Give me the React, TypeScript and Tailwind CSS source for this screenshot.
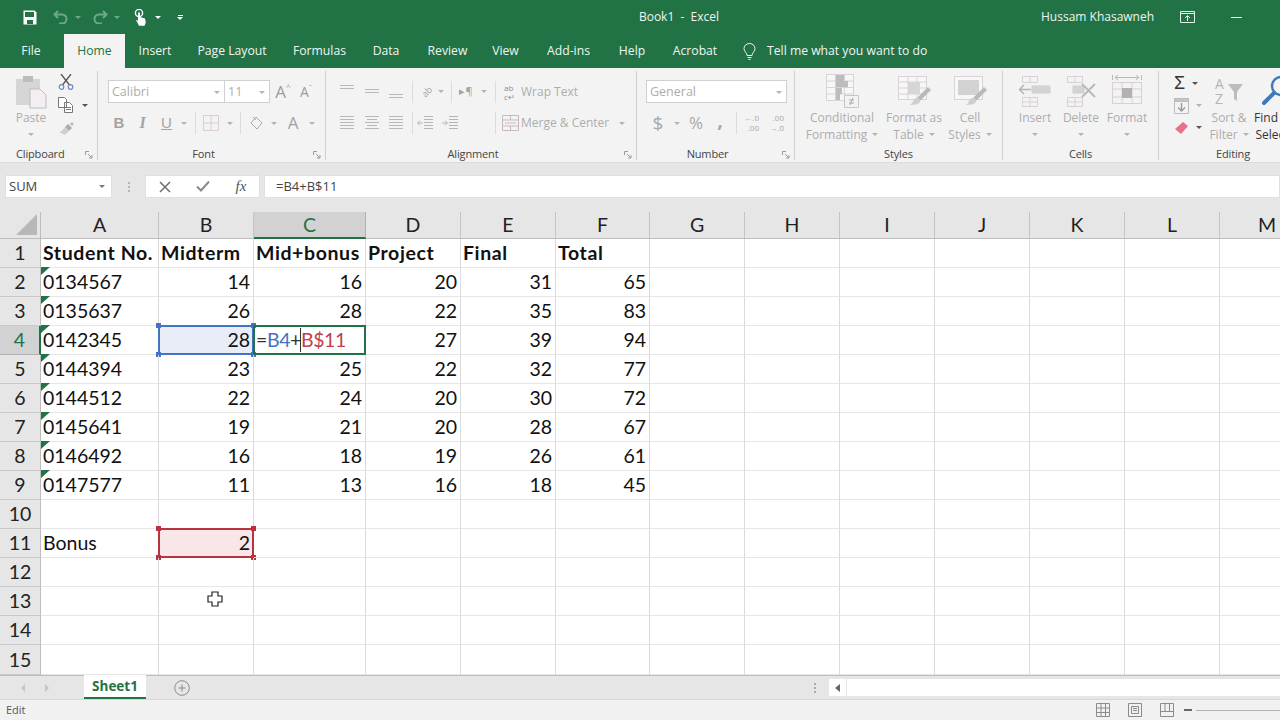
import type { ReactNode } from "react";

const ui = "font-['Open_Sans','Noto_Sans',sans-serif]";
const cellFont = "font-['Lato',sans-serif]";

const tabs: [string, string][] = [
  ["File", "w-[46px] mr-[10px]"],
  ["Home", "w-[61px]"],
  ["Insert", "w-[60px]"],
  ["Page Layout", "w-[94px]"],
  ["Formulas", "w-[81px]"],
  ["Data", "w-[52px]"],
  ["Review", "w-[71px]"],
  ["View", "w-[45px]"],
  ["Add-ins", "w-[81px]"],
  ["Help", "w-[46px]"],
  ["Acrobat", "w-[80px]"],
];

const columns = ["A", "B", "C", "D", "E", "F", "G", "H", "I", "J", "K", "L", "M"];

const students: [string, number, number, number, number, number][] = [
  ["0134567", 14, 16, 20, 31, 65],
  ["0135637", 26, 28, 22, 35, 83],
  ["0142345", 28, 0, 27, 39, 94],
  ["0144394", 23, 25, 22, 32, 77],
  ["0144512", 22, 24, 20, 30, 72],
  ["0145641", 19, 21, 20, 28, 67],
  ["0146492", 16, 18, 19, 26, 61],
  ["0147577", 11, 13, 16, 18, 45],
];

function Caret({ className = "border-t-[#b4b4b4]" }: { className?: string }) {
  return <span className={"inline-block w-0 h-0 border-x-[3px] border-x-transparent border-t-[3px] " + className} />;
}

function Launcher() {
  return (
    <svg width="8" height="8" viewBox="0 0 8 8" fill="none" stroke="#9a9a9a" strokeWidth="1" className="absolute right-[4px] top-[5px]">
      <path d="M.5 4V.5H4M3 3l4 4M7 4v3H4" />
    </svg>
  );
}

function Sep() {
  return <span className="w-px h-[22px] bg-[#dcdcdc] shrink-0" />;
}

function Box({ className, children }: { className: string; children: ReactNode }) {
  return <span className={"flex items-center justify-center shrink-0 " + className}>{children}</span>;
}

function Group({ label, width, labelClass = "text-center", launcher, children }: { label: string; width: string; labelClass?: string; launcher?: boolean; children: ReactNode }) {
  return (
    <section className={"flex flex-col shrink-0 h-[89px] my-[3px] border-r border-[#cfcfcf] " + width}>
      <div className="h-[75px] flex">{children}</div>
      <div className={"relative h-[14px] leading-[16px] text-[11px] tracking-[-0.15px] text-[#444] " + labelClass}>
        {label}
        {launcher && <Launcher />}
      </div>
    </section>
  );
}

function BigButton({ width, icon, lines, caret, dark }: { width: string; icon: ReactNode; lines: string[]; caret?: boolean; dark?: boolean }) {
  return (
    <div className={"flex flex-col items-center shrink-0 " + width}>
      <div className="h-[36px] mt-[2px] flex items-center justify-center">{icon}</div>
      <div className={"text-[12px] leading-[17px] text-center whitespace-nowrap " + (dark ? "text-[#333]" : "text-[#adadad]")}>
        <div>{lines[0]}</div>
        <div className="h-[17px] flex items-center justify-center gap-[5px]">
          {lines[1]}
          {caret && <Caret />}
        </div>
      </div>
    </div>
  );
}

function Lines({ rows }: { rows: [number, number][] }) {
  return (
    <svg width="16" height="16" viewBox="0 0 16 16" stroke="#b9b9b9" strokeWidth="1">
      {rows.map(([y, w], i) => (
        <path key={i} d={`M${8 - w / 2} ${y + 0.5}h${w}`} />
      ))}
    </svg>
  );
}

const alignLines: [number, number][] = [[1, 14], [4, 14], [7, 14], [10, 14], [13, 14]];

function Brush() {
  return (
    <g stroke="none">
      <path d="M31 12l3 3-11 11-3-3z" fill="#b9b9b9" />
      <path d="M19 23c3 0 5 2 4 4-1 2-5 3-10 3 3-2 3-6 6-7z" fill="#cfcfcf" />
    </g>
  );
}

function Grid() {
  return (
    <div className={"grid grid-cols-[41px_118px_95px_112px_95px_95px_94px_95px_95px_95px_95px_95px_95px_95px] grid-rows-[27px_repeat(14,29px)_30px] h-[463px] overflow-hidden bg-white text-[19.5px] leading-none text-[#111] " + cellFont}>
      <div className="bg-[#e6e6e6] border-r border-b border-[#bdbdbd] flex items-end justify-end pr-[3px] pb-[3px]">
        <svg width="21" height="21" viewBox="0 0 21 21">
          <path d="M21 0v21H0z" fill="#b8b8b8" />
        </svg>
      </div>
      {columns.map((c) => (
        <div
          key={c}
          className={
            "flex items-center justify-center border-r " +
            (c === "C"
              ? "bg-[#d2d2d2] text-[#217346] border-b-2 border-b-[#217346] border-r-[#b0b0b0]"
              : "bg-[#e6e6e6] text-[#222] border-b border-b-[#bdbdbd] border-r-[#c4c4c4]")
          }
        >
          {c}
        </div>
      ))}
      {Array.from({ length: 15 }, (_, i) => i + 1).map((n) => (
        <Row key={n} n={n} />
      ))}
    </div>
  );
}

function RowHead({ n }: { n: number }) {
  return (
    <div
      className={
        "flex items-center justify-center border-b border-r " +
        (n === 4 ? "bg-[#d2d2d2] text-[#217346] border-r-2 border-r-[#217346] border-b-[#b0b0b0]" : "bg-[#e6e6e6] text-[#222] border-b-[#c9c9c9] border-r-[#bdbdbd]")
      }
    >
      {n}
    </div>
  );
}

function Cell({ children, right, bold, className = "" }: { children?: ReactNode; right?: boolean; bold?: boolean; className?: string }) {
  return (
    <div
      className={
        "relative flex items-center whitespace-nowrap border-r border-b border-r-[#dadada] border-b-[#e6e6e6] " +
        (right ? "justify-end pr-[3px] " : "pl-[2px] ") +
        (bold ? "font-bold tracking-[0.6px] " : "") +
        className
      }
    >
      {children}
    </div>
  );
}

function Handles({ color }: { color: string }) {
  const base = "absolute w-[5px] h-[5px] " + color;
  return (
    <>
      <span className={base + " -left-[3px] -top-[3px]"} />
      <span className={base + " -right-[3px] -top-[3px]"} />
      <span className={base + " -left-[3px] -bottom-[3px]"} />
      <span className={base + " -right-[3px] -bottom-[3px]"} />
    </>
  );
}

function Flag() {
  return <span className="absolute left-0 -top-px w-0 h-0 border-t-[8px] border-r-[9px] border-t-[#217346] border-r-transparent" />;
}

function Row({ n }: { n: number }) {
  const blanks = columns.slice(6).map((c) => <Cell key={c} />);
  if (n === 1) {
    return (
      <>
        <RowHead n={n} />
        {["Student No.", "Midterm", "Mid+bonus", "Project", "Final", "Total"].map((t) => (
          <Cell key={t} bold>
            {t}
          </Cell>
        ))}
        {blanks}
      </>
    );
  }
  const s = students[n - 2];
  if (s) {
    const [id, mid, bonus, project, final, total] = s;
    return (
      <>
        <RowHead n={n} />
        <Cell className={n === 4 ? "border-r-0" : ""}>
          <Flag />
          {id}
        </Cell>
        {n === 4 ? (
          <Cell right className="bg-[#e8edf7]">
            <span className="absolute -inset-px border-2 border-[#4472c4]" />
            <Handles color="bg-[#4472c4]" />
            {mid}
          </Cell>
        ) : (
          <Cell right>{mid}</Cell>
        )}
        {n === 4 ? (
          <Cell className="z-10 tracking-[-0.4px]">
            <span className="absolute -inset-px border-2 border-[#217346]" />
            <span className="text-[#333]">=</span>
            <span className="text-[#4472c4]">B4</span>
            <span className="text-[#333]">+</span>
            <span className="inline-block w-px h-[24px] -ml-px bg-[#333]" />
            <span className="text-[#c0404c]">B$11</span>
          </Cell>
        ) : (
          <Cell right>{bonus}</Cell>
        )}
        <Cell right>{project}</Cell>
        <Cell right>{final}</Cell>
        <Cell right>{total}</Cell>
        {blanks}
      </>
    );
  }
  if (n === 11) {
    return (
      <>
        <RowHead n={n} />
        <Cell>Bonus</Cell>
        <Cell right className="bg-[#f8e6e8]">
          <span className="absolute -inset-px border-2 border-[#b8323f]" />
          <Handles color="bg-[#b8323f]" />
          2
        </Cell>
        {columns.slice(2).map((c) => (
          <Cell key={c} />
        ))}
      </>
    );
  }
  return (
    <>
      <RowHead n={n} />
      {columns.map((c) => (
        <Cell key={c} />
      ))}
    </>
  );
}

export default function App() {
  return (
    <div className={"relative w-[1280px] h-[720px] overflow-hidden bg-[#e6e6e6] text-[12.5px] " + ui}>
      {/* title bar */}
      <header className="h-[34px] bg-[#217346] flex items-center text-white">
        <svg width="14" height="15" viewBox="0 0 14 15" className="ml-[23px]" fill="none">
          <path d="M.5.5h11l2 2v12H.5z" fill="#fff" />
          <path d="M2 2h9v5H2z" fill="#217346" />
          <path d="M4 10h6v4H4z" fill="#217346" />
        </svg>
        <svg width="16" height="14" viewBox="0 0 16 14" fill="none" stroke="#6fa78b" strokeWidth="2" className="ml-[16px]">
          <path d="M5 1L1.5 4.5 5 8M2 4.5h7a4.5 4.5 0 010 9H6" />
        </svg>
        <Caret className="border-t-[#6fa78b] ml-[6px]" />
        <svg width="16" height="14" viewBox="0 0 16 14" fill="none" stroke="#6fa78b" strokeWidth="2" className="ml-[11px]">
          <path d="M11 1l3.5 3.5L11 8M14 4.5H7a4.5 4.5 0 000 9h3" />
        </svg>
        <Caret className="border-t-[#6fa78b] ml-[6px]" />
        <svg width="13" height="17" viewBox="0 0 13 17" fill="#fff" className="ml-[14px]">
          <circle cx="5" cy="4" r="3.6" fill="none" stroke="#fff" strokeWidth="1.4" />
          <path d="M4 3.5h2V8l5 1.5.8 4-1.3 3.2H5L2 11l1 0 1 1z" />
        </svg>
        <Caret className="border-t-white ml-[8px]" />
        <span className="ml-[16px] flex flex-col items-center gap-px">
          <span className="w-[5px] h-px bg-white" />
          <Caret className="border-t-white" />
        </span>
        <div className="ml-[451px] w-[90px] text-center text-[12px] whitespace-pre text-[#f0f5f2]">Book1  -  Excel</div>
        <div className="ml-[317px] w-[112px] text-center text-[12px] whitespace-nowrap text-[#eef4f0]">Hussam Khasawneh</div>
        <svg width="15" height="12" viewBox="0 0 15 12" fill="none" stroke="#e8f0eb" strokeWidth="1" className="ml-[27px]">
          <path d="M.5.5h14v11H.5zM.5 2.5h14M7.5 10V5M5 7l2.5-2.5L10 7" />
        </svg>
        <span className="ml-[36px] w-[11px] h-px bg-[#e8f0eb]" />
      </header>

      {/* tabs */}
      <nav className="h-[34px] bg-[#217346] flex items-stretch pl-[8px] text-[12.2px] text-[#f0f5f2]">
        {tabs.map(([t, w]) => (
          <div key={t} className={"flex items-center justify-center pt-px shrink-0 " + w + (t === "Home" ? " bg-[#f3f3f3] text-[#217346]" : "")}>
            {t}
          </div>
        ))}
        <svg width="13" height="17" viewBox="0 0 13 17" fill="none" stroke="#f0f5f2" strokeWidth="1" className="self-center ml-[8px]">
          <path d="M4 12.5C4 9.5 1 9 1 5.5a5.5 5 0 0111 0c0 3.500-3 4-3 7zM4.500 14.500h4M5.500 16.500h2" />
        </svg>
        <span className="self-center pt-px ml-[11px] whitespace-nowrap">Tell me what you want to do</span>
      </nav>

      {/* ribbon */}
      <div className="h-[95px] bg-[#f3f3f3] flex text-[#adadad] border-b border-[#dcdcdc]">
        <Group label="Clipboard" width="w-[98px]" labelClass="pl-[16px]" launcher>
          <BigButton
            width="w-[40px] ml-[11px]"
            icon={
              <svg width="32" height="35" viewBox="0 0 32 35">
                <path d="M1 5h24v26H1z" fill="#d6d6d6" />
                <path d="M8 2h10v6H8z" fill="#bdbdbd" />
                <path d="M15 15h10l6 6v13H15z" fill="#f4eef4" stroke="#bdbdbd" />
              </svg>
            }
            lines={["Paste", ""]}
            caret
          />
          <div className="ml-[7px] mt-[3px] flex flex-col gap-[7px]">
            <svg width="16" height="16" viewBox="0 0 16 16" fill="none">
              <path d="M3 0l8.500 11M13 0L4.500 11" stroke="#555" strokeWidth="1.3" />
              <circle cx="3.500" cy="13" r="2.300" stroke="#6c8ebf" strokeWidth="1.200" />
              <circle cx="12.500" cy="13" r="2.300" stroke="#6c8ebf" strokeWidth="1.200" />
            </svg>
            <div className="flex items-center gap-[8px] h-[16px]">
              <svg width="16" height="16" viewBox="0 0 16 16" fill="#fff" stroke="#777">
                <path d="M.5.5h6l2 2v8h-8zM6.500 5.500h5l3 3v7h-8z" />
                <path d="M8 10.500h5M8 12.500h5" />
              </svg>
              <Caret className="border-t-[#555]" />
            </div>
            <svg width="17" height="15" viewBox="0 0 17 15" className="mt-[1px]">
              <path d="M10 3l4 4-3 3-4-4z" fill="#aaa" />
              <path d="M7 6l4 4-4 4-6-3c2 0 4-2 6-5z" fill="#cfcfcf" />
              <path d="M12 3l2-2 2 2-2 2z" fill="#bbb" />
            </svg>
          </div>
        </Group>

        <Group label="Font" width="w-[228px]" labelClass="text-center pr-[16px]" launcher>
          <div className="pl-[10px] pt-[9px] flex flex-col gap-[10px] w-full">
            <div className="flex items-center h-[23px]">
              <div className="w-[117px] h-full bg-white border border-[#d0d0d0] flex items-center justify-between pt-px pl-[3px] pr-[4px]">
                Calibri
                <Caret />
              </div>
              <div className="w-[45px] h-full bg-white border border-l-0 border-[#d0d0d0] flex items-center justify-between pt-px pl-[3px] pr-[4px]">
                11
                <Caret />
              </div>
              <Box className="w-[24px] ml-[1px] text-[17px] text-[#9c9c9c]">
                A<span className="text-[8px] -mt-[10px]">^</span>
              </Box>
              <Box className="w-[22px] text-[14px] text-[#9c9c9c]">
                A<span className="text-[8px] -mt-[10px]">ˇ</span>
              </Box>
            </div>
            <div className="flex items-center h-[20px] text-[#a3a3a3]">
              <Box className="w-[22px] font-['Liberation_Sans'] font-bold text-[15px]">B</Box>
              <Box className="w-[25px] font-['Liberation_Serif'] italic font-bold text-[16px]">I</Box>
              <Box className="w-[23px] font-['Liberation_Sans'] underline text-[15px]">U</Box>
              <Box className="w-[12px]">
                <Caret />
              </Box>
              <Box className="w-[11px]">
                <Sep />
              </Box>
              <Box className="w-[20px]">
                <svg width="16" height="16" viewBox="0 0 16 16" fill="none" stroke="#d9cdd4">
                  <path d="M.5.5h15v15H.5zM8 .5v15M.5 8h15" />
                </svg>
              </Box>
              <Box className="w-[18px]">
                <Caret />
              </Box>
              <Box className="w-[2px]">
                <Sep />
              </Box>
              <Box className="w-[30px]">
                <svg width="15" height="15" viewBox="0 0 15 15" fill="none" stroke="#a9a9a9">
                  <path d="M7 1l6 6-5 6-6-6zM4 1l3 3" />
                </svg>
              </Box>
              <Box className="w-[6px]">
                <Caret />
              </Box>
              <Box className="w-[32px] text-[17px]">A</Box>
              <Box className="w-[6px]">
                <Caret />
              </Box>
            </div>
          </div>
        </Group>

        <Group label="Alignment" width="w-[311px]" labelClass="text-center pr-[16px]" launcher>
          <div className="pl-[9px] pt-[9px] flex flex-col gap-[10px] w-full">
            <div className="flex items-center h-[23px]">
              <Box className="w-[24px]">
                <Lines rows={[[1, 14], [4, 14]]} />
              </Box>
              <Box className="w-[25px]">
                <Lines rows={[[5, 14], [8, 14]]} />
              </Box>
              <Box className="w-[24px]">
                <Lines rows={[[10, 14], [13, 14]]} />
              </Box>
              <Box className="w-[8px]">
                <Sep />
              </Box>
              <Box className="w-[22px] text-[9px] -rotate-45 text-[#a3a3a3]">ab</Box>
              <Box className="w-[6px]">
                <Caret />
              </Box>
              <Box className="w-[14px]">
                <Sep />
              </Box>
              <Box className="w-[16px] text-[11px] text-[#a3a3a3]">▸¶</Box>
              <Box className="w-[20px]">
                <Caret />
              </Box>
              <Box className="w-[2px]">
                <Sep />
              </Box>
              <span className="ml-[8px] w-[16px] text-[8px] leading-[9px] text-[#8e8e8e]">
                ab
                <br />c↵
              </span>
              <span className="ml-px pt-px text-[12px] whitespace-nowrap">Wrap Text</span>
            </div>
            <div className="flex items-center h-[20px]">
              <Box className="w-[24px]">
                <Lines rows={alignLines} />
              </Box>
              <Box className="w-[25px]">
                <Lines rows={[[1, 14], [4, 10], [7, 14], [10, 10], [13, 14]]} />
              </Box>
              <Box className="w-[24px]">
                <Lines rows={alignLines} />
              </Box>
              <Box className="w-[8px]">
                <Sep />
              </Box>
              <Box className="w-[18px]">
                <svg width="16" height="16" viewBox="0 0 16 16" fill="none" stroke="#b5b5b5">
                  <path d="M7 1.500h9M7 4.500h9M7 7.500h9M7 10.500h9M7 13.500h9M6 8H1M3 5.500L.5 8 3 10.500" />
                </svg>
              </Box>
              <Box className="w-[32px]">
                <svg width="16" height="16" viewBox="0 0 16 16" fill="none" stroke="#b5b5b5">
                  <path d="M7 1.500h9M7 4.500h9M7 7.500h9M7 10.500h9M7 13.500h9M0 8h5M3 5.500L5.500 8 3 10.500" />
                </svg>
              </Box>
              <Box className="w-[2px] ml-[28px]">
                <Sep />
              </Box>
              <Box className="w-[17px] ml-[6px]">
                <svg width="17" height="16" viewBox="0 0 17 16" fill="none" stroke="#c9b9bf">
                  <path d="M.5.5h16v15H.5zM.5 5h16M.5 11h16M8.500.5V5M8.500 11v4.500M3 8h11" />
                </svg>
              </Box>
              <span className="ml-[2px] text-[12px] whitespace-nowrap w-[98px]">Merge &amp; Center</span>
              <Caret />
            </div>
          </div>
        </Group>

        <Group label="Number" width="w-[158px]" labelClass="text-center pr-[16px]" launcher>
          <div className="pl-[9px] pt-[9px] flex flex-col gap-[10px] w-full">
            <div className="w-[141px] h-[23px] bg-white border border-[#d0d0d0] flex items-center justify-between pt-px pl-[3px] pr-[4px]">
              General
              <Caret />
            </div>
            <div className="flex items-center h-[20px] text-[#a8a8a8]">
              <Box className="w-[24px] text-[19px]">$</Box>
              <Box className="w-[14px]">
                <Caret />
              </Box>
              <Box className="w-[24px] text-[17px]">%</Box>
              <Box className="w-[24px] text-[20px] font-bold leading-none -mt-[6px]">,</Box>
              <Box className="w-[8px]">
                <Sep />
              </Box>
              <span className="ml-[3px] w-[16px] text-[8px] leading-[10px] text-right whitespace-nowrap">
                ←.0
                <br />
                .00
              </span>
              <span className="ml-[9px] w-[16px] text-[8px] leading-[10px] text-right whitespace-nowrap">
                .00
                <br />
                →.0
              </span>
            </div>
          </div>
        </Group>

        <Group label="Styles" width="w-[208px]">
          <BigButton
            width="w-[72px] ml-[11px]"
            icon={
              <svg width="33" height="34" viewBox="0 0 33 34" fill="none" stroke="#d9d2d9">
                <path d="M.5.500h27v26H.5zM.5 7h27M.5 13.500h27M.5 20h27M9.500.500v26M18.500.500v26" fill="#f7f7f7" />
                <path d="M10 1h8v6h-8z" fill="#bdbdbd" stroke="none" />
                <path d="M10 7h12v6H10z" fill="#bdbdbd" stroke="none" />
                <path d="M10 14h6v6h-6z" fill="#bdbdbd" stroke="none" />
                <path d="M10 20h4v6h-4z" fill="#bdbdbd" stroke="none" />
                <path d="M18.500 21.500h14v12h-14z" fill="#f3f3f3" stroke="#c6c6c6" />
                <path d="M23 26h5M23 29h5M27 24l-3 7" stroke="#aaa" />
              </svg>
            }
            lines={["Conditional", "Formatting"]}
            caret
          />
          <BigButton
            width="w-[72px]"
            icon={
              <svg width="34" height="32" viewBox="0 0 34 32" fill="none" stroke="#d9d2d9">
                <path d="M1.500 1.500h28v23h-28zM1.500 7h28M1.500 13h28M1.500 19h28M11 1.500v23M20 1.500v23" fill="#f7f7f7" />
                <path d="M11 7h12v12H11z" fill="#d6d6d6" stroke="none" />
                <Brush />
              </svg>
            }
            lines={["Format as", "Table"]}
            caret
          />
          <BigButton
            width="w-[40px]"
            icon={
              <svg width="34" height="32" viewBox="0 0 34 32" fill="none" stroke="#d9d2d9">
                <path d="M1.500 1.500h28v23h-28z" fill="#f7f7f7" />
                <path d="M5 5h21v15H5z" fill="#d2d2d2" stroke="none" />
                <Brush />
              </svg>
            }
            lines={["Cell", "Styles"]}
            caret
          />
        </Group>

        <Group label="Cells" width="w-[156px]">
          <BigButton
            width="w-[46px] ml-[9px]"
            icon={
              <svg width="32" height="32" viewBox="0 0 32 32" fill="none" stroke="#d9cfd6">
                <path d="M3.500 1.500h15v6h-15zM11 1.500v6M3.500 22.500h15v9h-15zM11 22.500v9M3.500 27h15" />
                <path d="M13 11h18v7H13z" fill="#d4d4d4" stroke="#cfcfcf" />
                <path d="M12 14.500H1M5 10l-4.500 4.500L5 19" stroke="#b4b4b4" strokeWidth="1.500" />
              </svg>
            }
            lines={["Insert", ""]}
            caret
          />
          <BigButton
            width="w-[46px]"
            icon={
              <svg width="32" height="32" viewBox="0 0 32 32" fill="none" stroke="#d9cfd6">
                <path d="M2.500 1.500h15v6h-15zM10 1.500v6M2.500 22.500h15v9h-15zM10 22.500v9M2.500 27h15" />
                <path d="M8 11h11v7H8z" fill="#d4d4d4" stroke="#cfcfcf" />
                <path d="M17 9l13 13M30 9L17 22" stroke="#b9b9b9" strokeWidth="2" />
              </svg>
            }
            lines={["Delete", ""]}
            caret
          />
          <BigButton
            width="w-[46px]"
            icon={
              <svg width="32" height="34" viewBox="0 0 32 34" fill="none" stroke="#d9cfd6">
                <path d="M1.500 1v5M30.500 1v5M4 3.500h24M7 1l-3 2.500L7 6M25 1l3 2.500L25 6" stroke="#b9b9b9" />
                <path d="M1.500 8.500h29v21h-29zM1.500 15h29M1.500 23h29M11 8.500v21M21 8.500v21" />
                <path d="M11 14h10v10H11z" fill="#b2b2b2" stroke="none" />
              </svg>
            }
            lines={["Format", ""]}
            caret
          />
        </Group>

        <section className="flex shrink-0 w-[148px] h-[89px] my-[3px] flex-col">
          <div className="h-[75px] flex">
            <div className="ml-[15px] w-[32px] pt-[3px] flex flex-col gap-[5px] shrink-0">
              <div className="flex items-center gap-[7px] h-[18px] font-['Liberation_Sans'] text-[18px] text-[#333]">
                Σ<Caret className="border-t-[#555]" />
              </div>
              <div className="flex items-center gap-[7px] h-[17px]">
                <svg width="15" height="16" viewBox="0 0 15 16" fill="none" stroke="#bcbcbc">
                  <path d="M.5.500h14v15H.5z" />
                  <path d="M.5.500h14v3H.5z" fill="#c5c5c5" />
                  <path d="M7.500 5v8M4 9.500l3.500 3.500L11 9.500" stroke="#999" strokeWidth="1.400" />
                </svg>
                <Caret />
              </div>
              <div className="flex items-center gap-[7px] h-[17px]">
                <svg width="15" height="14" viewBox="0 0 15 14">
                  <path d="M9 1l5 4-7 8-6-5z" fill="#e8718a" />
                </svg>
                <Caret className="border-t-[#555]" />
              </div>
            </div>
            <BigButton
              width="w-[46px] shrink-0"
              icon={
                <svg width="32" height="32" viewBox="0 0 32 32">
                  <text x="2" y="14" fontSize="14" fill="#b5b5b5">A</text>
                  <text x="2" y="29" fontSize="14" fill="#b5b5b5">Z</text>
                  <path d="M15 9h15l-6 8v9l-3-2v-7z" fill="#bcbcbc" />
                </svg>
              }
              lines={["Sort &", "Filter"]}
              caret
            />
            <BigButton
              width="w-[40px] shrink-0"
              dark
              icon={
                <svg width="36" height="32" viewBox="0 0 36 32" fill="none" className="ml-[10px]">
                  <circle cx="22" cy="11" r="9" stroke="#3e79b9" strokeWidth="2.400" />
                  <path d="M15 18L5 28" stroke="#3e79b9" strokeWidth="4" strokeLinecap="round" />
                </svg>
              }
              lines={["Find &", "Select"]}
            />
          </div>
          <div className="h-[14px] leading-[16px] text-[11px] tracking-[-0.15px] text-center text-[#444]">Editing</div>
        </section>
      </div>

      {/* formula bar */}
      <div className="h-[12px]" />
      <div className="h-[23px] flex text-[#444] text-[13px]">
        <div className="ml-[5px] w-[107px] bg-white border border-[#e0e0e0] flex items-center justify-between pl-[3px] pr-[6px]">
          SUM
          <Caret className="border-t-[#777]" />
        </div>
        <div className="w-[33px] flex flex-col items-center justify-center gap-[2px]">
          <span className="w-[2px] h-[2px] bg-[#b5b5b5]" />
          <span className="w-[2px] h-[2px] bg-[#b5b5b5]" />
          <span className="w-[2px] h-[2px] bg-[#b5b5b5]" />
        </div>
        <div className="w-[115px] bg-white border border-[#e0e0e0] flex items-center">
          <Box className="w-[37px]">
            <svg width="12" height="12" viewBox="0 0 12 12" stroke="#6e6e6e" strokeWidth="1.500">
              <path d="M1 1l10 10M11 1L1 11" />
            </svg>
          </Box>
          <Box className="w-[40px]">
            <svg width="14" height="11" viewBox="0 0 14 11" fill="none" stroke="#8a8a8a" strokeWidth="2">
              <path d="M1 5.500l4 4 8-9" />
            </svg>
          </Box>
          <Box className="w-[36px] font-['Liberation_Serif'] italic text-[15px] text-[#555]">fx</Box>
        </div>
        <div className="ml-[4px] flex-1 bg-white border border-[#e0e0e0] flex items-center pl-[11px]">=B4+B$11</div>
      </div>
      <div className="h-[14px]" />

      <Grid />

      {/* sheet tabs */}
      <div className="h-[24px] flex items-center border-t border-[#bdbdbd] bg-[#e6e6e6]">
        <span className="ml-[21px] w-0 h-0 border-y-[4px] border-y-transparent border-r-[4px] border-r-[#c4c4c4]" />
        <span className="ml-[20px] w-0 h-0 border-y-[4px] border-y-transparent border-l-[4px] border-l-[#c4c4c4]" />
        <div className="ml-[35px] w-[62px] h-[24px] -mt-px bg-white border-b-2 border-[#217346] flex items-center justify-center text-[13.5px] font-bold text-[#217346]">Sheet1</div>
        <svg width="16" height="16" viewBox="0 0 16 16" fill="none" stroke="#8a8a8a" className="ml-[28px]">
          <circle cx="8" cy="8" r="7.300" />
          <path d="M8 4.500v7M4.500 8h7" />
        </svg>
        <div className="ml-[624px] flex flex-col gap-[2px]">
          <span className="w-[2px] h-[2px] bg-[#a9a9a9]" />
          <span className="w-[2px] h-[2px] bg-[#a9a9a9]" />
          <span className="w-[2px] h-[2px] bg-[#a9a9a9]" />
        </div>
        <div className="ml-[13px] w-[17px] h-[17px] bg-white flex items-center justify-center">
          <span className="w-0 h-0 border-y-[4px] border-y-transparent border-r-[5px] border-r-[#666]" />
        </div>
        <div className="ml-px flex-1 h-[17px] bg-white" />
      </div>

      {/* status bar */}
      <footer className="h-[21px] bg-[#f1f1f1] flex items-center text-[11px] text-[#555] border-t border-[#d8d8d8]">
        <span className="ml-[6px] w-[17px]">Edit</span>
        <svg width="14" height="14" viewBox="0 0 14 14" fill="none" stroke="#8c8c8c" className="ml-[1073px]">
          <path d="M.5.500h13v13H.5zM.5 5h13M.5 9.500h13M5 .500v13M9.500 .500v13" />
        </svg>
        <svg width="14" height="14" viewBox="0 0 14 14" fill="none" stroke="#8c8c8c" className="ml-[18px]">
          <path d="M.5.500h13v13H.5zM3.500 3.500h7v7h-7zM5 5.500h4M5 7.500h4" />
        </svg>
        <svg width="14" height="14" viewBox="0 0 14 14" fill="none" stroke="#8c8c8c" className="ml-[18px]">
          <path d="M.5.500h13v13H.5zM.5 8.500h13M5 .500v8M9.500 .500v8" />
        </svg>
        <span className="ml-[10px] w-[8px] h-[2px] bg-[#666]" />
        <span className="ml-[4px] flex-1 h-px bg-[#b5b5b5]" />
      </footer>

      {/* mouse cursor */}
      <svg width="16" height="16" viewBox="0 0 16 16" className="absolute left-[207px] top-[591px]" fill="#fff" stroke="#222" strokeWidth="1.200">
        <path d="M5 1h6v4h4v6h-4v4H5v-4H1V5h4z" />
      </svg>
    </div>
  );
}
